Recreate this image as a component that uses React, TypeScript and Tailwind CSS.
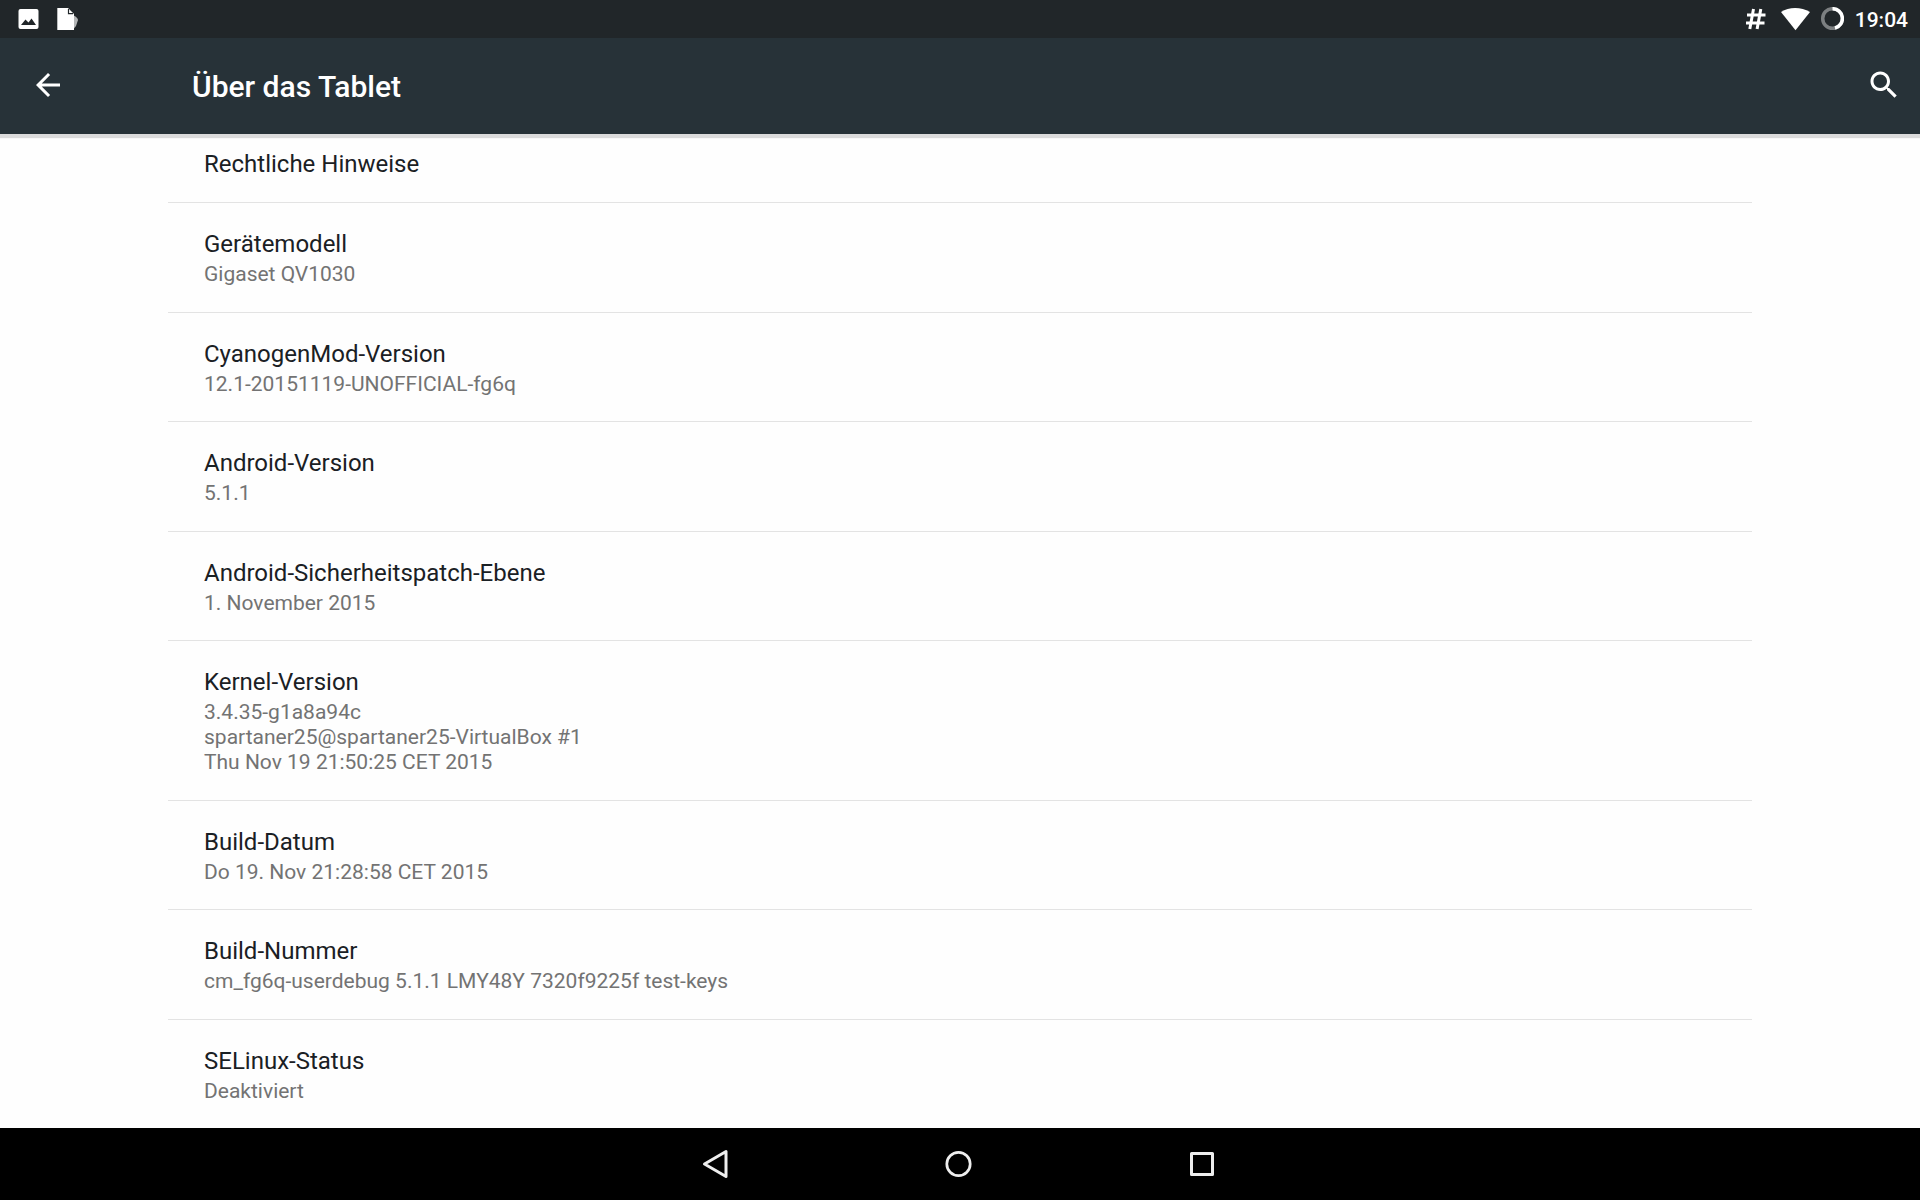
type Entry = { title: string; summary?: string[] };

const entries: Entry[] = [
  { title: "Rechtliche Hinweise" },
  { title: "Gerätemodell", summary: ["Gigaset QV1030"] },
  { title: "CyanogenMod-Version", summary: ["12.1-20151119-UNOFFICIAL-fg6q"] },
  { title: "Android-Version", summary: ["5.1.1"] },
  { title: "Android-Sicherheitspatch-Ebene", summary: ["1. November 2015"] },
  {
    title: "Kernel-Version",
    summary: [
      "3.4.35-g1a8a94c",
      "spartaner25@spartaner25-VirtualBox #1",
      "Thu Nov 19 21:50:25 CET 2015",
    ],
  },
  { title: "Build-Datum", summary: ["Do 19. Nov 21:28:58 CET 2015"] },
  {
    title: "Build-Nummer",
    summary: ["cm_fg6q-userdebug 5.1.1 LMY48Y 7320f9225f test-keys"],
  },
  { title: "SELinux-Status", summary: ["Deaktiviert"] },
];

function StatusBar() {
  return (
    <div className="flex h-[38px] shrink-0 items-center justify-between bg-[#212629] pr-3 pl-4 text-white">
      <div className="flex items-center gap-4">
        <svg className="size-6" viewBox="0 0 24 24" aria-hidden="true">
          <rect x="2.5" y="2" width="20" height="20" rx="2" fill="#fff" />
          <path d="M5 18 L9.5 12.5 L12.5 15.5 L15.5 11.5 L20 18 Z" fill="#212629" />
        </svg>
        <svg className="size-6" viewBox="0 0 24 24" aria-hidden="true">
          <path d="M17 8 C20 9.500 22 11.500 22 13 L20 19 L17.500 22 Z" fill="#b4b6b7" />
          <path d="M1.300 1 H12 L18 7 V23 H1.300 Z" fill="#fff" />
          <path d="M12.500 2 V6.600 H17" fill="none" stroke="#212629" strokeWidth="1.200" />
        </svg>
      </div>
      <div className="flex items-center">
        <svg className="size-6" viewBox="0 0 24 24" aria-hidden="true">
          <path
            d="M9.500 2 L5.800 22 M16.800 2 L13.100 22 M3 8 H21.500 M2 16 H20.500"
            fill="none"
            stroke="#fff"
            strokeWidth="3"
          />
        </svg>
        <svg className="ml-3 h-6 w-8" viewBox="0 0 32 24" aria-hidden="true">
          <path d="M15.500 23.300 L1 5 C9 -0.500 21 -0.500 30 5 Z" fill="#fff" />
        </svg>
        <svg className="ml-2 size-6" viewBox="0 0 24 24" aria-hidden="true">
          <circle cx="12.500" cy="11.500" r="9.800" fill="none" stroke="#7c7f81" strokeWidth="3.500" />
          <path
            d="M12.500 1.700 A9.800 9.800 0 0 1 15 21"
            fill="none"
            stroke="#fff"
            strokeWidth="3.500"
          />
        </svg>
        <span className="ml-[11px] pt-0.5 text-[21px] leading-6 font-medium">19:04</span>
      </div>
    </div>
  );
}

function ActionBar() {
  return (
    <header className="z-10 flex h-24 shrink-0 items-center bg-[#273238] pr-[18px] pb-0.5 pl-[30px] text-white shadow-[0_4px_1px_rgba(50,45,50,0.17)]">
      <button type="button" aria-label="Zurück">
        <svg className="size-9" viewBox="0 0 24 24" fill="currentColor">
          <path d="M20 11H7.830l5.590-5.590L12 4l-8 8 8 8 1.410-1.410L7.830 13H20v-2z" />
        </svg>
      </button>
      <h1 className="ml-[126px] flex-1 pt-1 text-[30px] leading-9 font-medium">Über das Tablet</h1>
      <button type="button" aria-label="Suchen">
        <svg className="size-9" viewBox="0 0 24 24" fill="currentColor">
          <path d="M15.500 14h-.79l-.28-.27C15.410 12.590 16 11.110 16 9.500 16 5.910 13.090 3 9.500 3S3 5.910 3 9.500 5.910 16 9.500 16c1.610 0 3.090-.59 4.230-1.570l.27.28v.79l5 4.990L20.490 19l-4.990-5zm-6 0C7.010 14 5 11.990 5 9.500S7.010 5 9.500 5 14 7.010 14 9.500 11.990 14 9.500 14z" />
        </svg>
      </button>
    </header>
  );
}

function NavigationBar() {
  return (
    <nav className="flex h-[72px] shrink-0 justify-center bg-black pr-0.5 text-[#eeeeee]">
      <button type="button" aria-label="Zurück" className="flex w-[243px] items-center justify-center">
        <svg className="size-8" viewBox="0 0 32 32" fill="none" stroke="currentColor" strokeWidth="3" strokeLinejoin="round">
          <path d="M4.500 16 L26 3.500 V28.500 Z" />
        </svg>
      </button>
      <button type="button" aria-label="Startseite" className="flex w-[243px] items-center justify-center">
        <svg className="size-8" viewBox="0 0 32 32" fill="none" stroke="currentColor" strokeWidth="2.700">
          <circle cx="15.500" cy="16" r="11.700" />
        </svg>
      </button>
      <button type="button" aria-label="Übersicht" className="flex w-[243px] items-center justify-center">
        <svg className="size-8" viewBox="0 0 32 32" fill="none" stroke="currentColor" strokeWidth="3" strokeLinejoin="round">
          <rect x="5.500" y="5.500" width="21" height="21" />
        </svg>
      </button>
    </nav>
  );
}

export default function App() {
  return (
    <div className="flex h-screen flex-col overflow-hidden bg-[#fefefe] font-['Roboto',sans-serif]">
      <StatusBar />
      <ActionBar />
      <main className="flex min-h-0 flex-1 flex-col overflow-hidden px-42">
        <ul className="flex flex-1 flex-col">
          {entries.map(({ title, summary }) => (
            <li
              key={title}
              className="flex-auto border-b border-[#e3e3e3] px-9 pt-[27px] pb-6 first:pt-4 last:border-b-0"
            >
              <h2 className="text-2xl leading-7 text-[#1a2024]">{title}</h2>
              {summary && (
                <p className="mt-1 text-[21px] leading-[25px] text-[#737373]">
                  {summary.map((line) => (
                    <span key={line} className="block">
                      {line}
                    </span>
                  ))}
                </p>
              )}
            </li>
          ))}
        </ul>
      </main>
      <NavigationBar />
    </div>
  );
}
